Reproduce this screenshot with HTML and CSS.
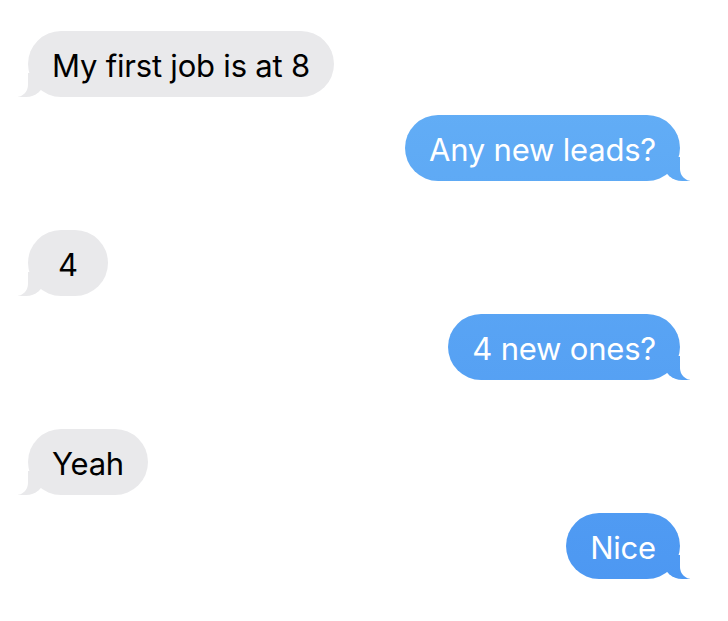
FILE: index.html
```html
<!DOCTYPE html>
<html lang="en">
<head>
    <meta charset="UTF-8">
    <meta name="viewport" content="width=device-width, initial-scale=1.0">
    <title>Messages</title>
    <link rel="stylesheet" href="styles.css">
</head>
<body>
    <main class="thread">
        <div class="pair">
            <div class="msg them">My first job is at 8</div>
            <div class="msg me">Any new leads?</div>
        </div>
        <div class="pair">
            <div class="msg them">4</div>
            <div class="msg me">4 new ones?</div>
        </div>
        <div class="pair">
            <div class="msg them">Yeah</div>
            <div class="msg me">Nice</div>
        </div>
    </main>
</body>
</html>
```

FILE: styles.css
```css
body {
    margin: 0;
    background: #fff;
    font-family: Inter, "Open Sans", sans-serif;
}
.thread {
    display: flex;
    flex-direction: column;
    gap: 49px;
    padding: 31px 48px 0 28px;
}
.pair {
    display: flex;
    flex-direction: column;
    gap: 18px;
}
.msg {
    position: relative;
    box-sizing: border-box;
    min-width: 80px;
    max-width: 70%;
    padding: 17px 24px 13px;
    border-radius: 33px;
    font-size: 31px;
    line-height: 36px;
    letter-spacing: -0.2px;
    text-align: center;
}
.them {
    align-self: flex-start;
    background: #e9e9eb;
    color: #000;
}
.me {
    align-self: flex-end;
    color: #fff;
    background: linear-gradient(#67b2f7 0, #60abf5 150px, #4d98f2 580px) fixed;
}
/* tails */
.msg::before,
.msg::after {
    content: "";
    position: absolute;
    bottom: 0;
    height: 24px;
}
.them::before {
    left: -10px;
    width: 26px;
    background: #e9e9eb;
    border-bottom-right-radius: 18px 16px;
}
.them::after {
    left: -26px;
    width: 26px;
    background: #fff;
    border-bottom-right-radius: 12px;
}
.me::before {
    right: -10px;
    width: 26px;
    background: inherit;
    border-bottom-left-radius: 18px 16px;
}
.me::after {
    right: -26px;
    width: 26px;
    background: #fff;
    border-bottom-left-radius: 12px;
}
```
